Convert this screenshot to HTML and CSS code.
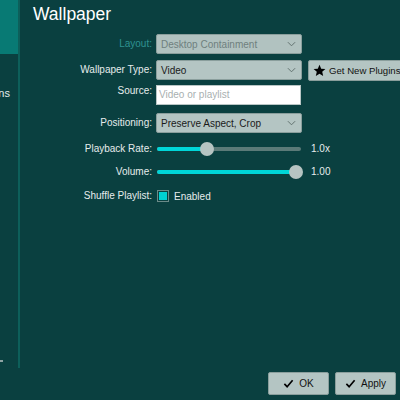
FILE: index.html
```html
<!DOCTYPE html>
<html>
<head>
<meta charset="utf-8">
<link rel="stylesheet" href="styles.css">
</head>
<body>
<div class="app">
  <aside class="sidebar">
    <div class="side-item selected"></div>
    <div class="side-item"><span>Mouse Actions</span></div>
    <div class="side-scroll"></div>
  </aside>
  <main class="main">
    <h1 class="title">Wallpaper</h1>
    <div class="form">
      <label class="label disabled">Layout:</label>
      <div class="combo disabled"><span>Desktop Containment</span><svg class="chev" viewBox="0 0 10 6"><path d="M1 1l4 4 4-4" fill="none" stroke="currentColor" stroke-width="1"/></svg></div>
      <div></div>

      <label class="label">Wallpaper Type:</label>
      <div class="combo"><span>Video</span><svg class="chev" viewBox="0 0 10 6"><path d="M1 1l4 4 4-4" fill="none" stroke="currentColor" stroke-width="1"/></svg></div>
      <button class="btn plugins"><svg class="star" viewBox="0 0 24 24"><path d="M12 1.5l3.1 7.2 7.8.6-5.9 5.1 1.8 7.6L12 18l-6.8 4 1.8-7.6-5.9-5.1 7.8-.6z" fill="#000"/></svg>Get New Plugins</button>

      <label class="label top">Source:</label>
      <div class="field">Video or playlist</div>
      <div></div>

      <label class="label">Positioning:</label>
      <div class="combo"><span>Preserve Aspect, Crop</span><svg class="chev" viewBox="0 0 10 6"><path d="M1 1l4 4 4-4" fill="none" stroke="currentColor" stroke-width="1"/></svg></div>
      <div></div>

      <label class="label">Playback Rate:</label>
      <div class="slider"><div class="track"><div class="fill" style="width:50px"></div><div class="handle" style="left:50px"></div></div></div>
      <div class="value">1.0x</div>

      <label class="label">Volume:</label>
      <div class="slider"><div class="track"><div class="fill" style="width:139px"></div><div class="handle" style="left:139px"></div></div></div>
      <div class="value">1.00</div>

      <label class="label">Shuffle Playlist:</label>
      <div class="check"><span class="box"></span><span>Enabled</span></div>
      <div></div>
    </div>
  </main>
</div>
<div class="buttons">
  <button class="btn"><svg class="tick" viewBox="0 0 12 12"><path d="M1.5 6.5l3 3 6-7" fill="none" stroke="#000" stroke-width="1.8"/></svg>OK</button>
  <button class="btn"><svg class="tick" viewBox="0 0 12 12"><path d="M1.5 6.5l3 3 6-7" fill="none" stroke="#000" stroke-width="1.8"/></svg>Apply</button>
</div>
</body>
</html>
```
FILE: styles.css
```css
html, body {
  margin: 0;
  padding: 0;
  width: 400px;
  height: 400px;
  overflow: hidden;
  background: #0a4040;
  font-family: "Liberation Sans", Arial, sans-serif;
  font-size: 10px;
  color: #e6ecec;
}
.app {
  display: flex;
  height: 368px;
}
.sidebar {
  flex: none;
  width: 18px;
  border-right: 2px solid #0d5f5a;
  display: flex;
  flex-direction: column;
  overflow: hidden;
}
.side-item {
  height: 54px;
  flex: none;
}
.side-item.selected {
  background: #087a74;
}
.side-item:nth-child(2) {
  height: 24px;
  margin-top: 27px;
  display: flex;
  justify-content: flex-end;
  align-items: center;
  padding-right: 8px;
  white-space: nowrap;
  font-size: 11px;
}
.side-scroll {
  margin-top: auto;
  margin-bottom: 6px;
  width: 3px;
  height: 2px;
  background: #8fa3a3;
}
.main {
  flex: 1;
  min-width: 0;
}
.title {
  margin: 3px 0 0 13px;
  font-size: 17.5px;
  font-weight: normal;
  line-height: 22px;
  color: #ffffff;
}
.form {
  margin-top: 9px;
  display: grid;
  grid-template-columns: 132px 146px auto;
  grid-template-rows: 26px 25px 28px 26px 23px 24px 20px;
  column-gap: 4px;
  align-items: start;
}
.label {
  text-align: right;
  line-height: 20px;
  white-space: nowrap;
}
.label.top {
  line-height: 12px;
}
.label.disabled {
  color: #2f9290;
}
.combo {
  height: 20px;
  box-sizing: border-box;
  border: 1px solid #8a9e9c;
  border-radius: 2px;
  background: #b4c5c3;
  color: #1a1a1a;
  display: flex;
  align-items: center;
  justify-content: space-between;
  padding: 0 4px 0 4px;
  font-size: 10px;
}
.combo.disabled {
  color: #6f807e;
  background: #b1c2c0;
}
.chev {
  width: 9px;
  height: 6px;
  color: #5a6a68;
  margin-right: 1px;
}
.field {
  height: 20px;
  box-sizing: border-box;
  border: 1px solid #b9c6c5;
  background: #ffffff;
  color: #a8b0b0;
  line-height: 18px;
  padding-left: 2px;
  width: 145px;
}
.btn {
  height: 21px;
  box-sizing: border-box;
  border: 1px solid #8a9e9c;
  border-radius: 2px;
  background: #b4c5c3;
  color: #111;
  font-family: inherit;
  font-size: 10px;
  display: flex;
  align-items: center;
  gap: 5px;
  padding: 0 6px;
  white-space: nowrap;
}
.plugins {
  margin-left: 2px;
  width: 100px;
  padding-left: 4px;
  gap: 3px;
  font-size: 9.6px;
}
.star {
  width: 13px;
  height: 13px;
  flex: none;
}
.slider {
  height: 20px;
  display: flex;
  align-items: center;
}
.track {
  position: relative;
  width: 144px;
  height: 4px;
  margin-left: 1px;
  border-radius: 2px;
  background: #5b7a78;
}
.fill {
  height: 4px;
  border-radius: 2px;
  background: #00d6d8;
}
.handle {
  position: absolute;
  top: -5px;
  width: 14px;
  height: 14px;
  margin-left: -7px;
  border-radius: 50%;
  background: #b6c4c2;
}
.value {
  line-height: 20px;
  padding-left: 5px;
}
.check {
  height: 20px;
  display: flex;
  align-items: center;
  gap: 5px;
  padding-left: 1px;
}
.box {
  width: 10px;
  height: 10px;
  border: 1px solid #6a8a88;
  background: #00d0d2;
  box-shadow: inset 0 0 0 1px #0a4040;
}
.buttons {
  display: flex;
  justify-content: flex-end;
  gap: 6px;
  padding: 4px 4px 0 0;
}
.buttons .btn {
  width: 61px;
  height: 23px;
  justify-content: center;
}
.tick {
  width: 11px;
  height: 11px;
  flex: none;
}
```
